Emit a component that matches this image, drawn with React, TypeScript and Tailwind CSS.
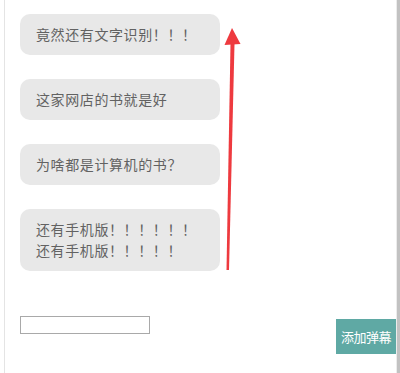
import React from "react"

const messages = [
  "竟然还有文字识别！！！",
  "这家网店的书就是好",
  "为啥都是计算机的书？",
  "还有手机版！！！！！！\n还有手机版！！！！！",
]

function Arrow() {
  return (
    <svg className="absolute left-[220px] top-[24px]" width="28" height="252" viewBox="0 0 28 252">
      <polygon points="6.5,246 9,246 14.5,20 10.5,20" fill="#ee3a3f" />
      <polygon points="12,4 4.5,21 20.5,20" fill="#ee3a3f" />
    </svg>
  )
}

export default function App() {
  return (
    <div
      className="relative w-[400px] h-[373px] bg-white overflow-hidden flex"
      style={{ fontFamily: '"Noto Sans CJK SC", "Liberation Sans", sans-serif' }}
    >
      <div className="w-[4px]" />
      <div className="w-px bg-[#e4e4e4]" />
      <div className="flex-1 flex flex-col">
        <div className="flex flex-col gap-[24px] pt-[14px] pl-[15px]">
          {messages.map((m, i) => (
            <div
              key={i}
              className="w-[200px] rounded-[10px] bg-[#e8e8e8] px-[16px] py-[10px] text-[14px] leading-[21px] tracking-[0.6px] text-[#626262] whitespace-pre-line"
            >
              {m}
            </div>
          ))}
        </div>
        <div className="flex items-start justify-between pl-[15px] mt-[45px]">
          <input type="text" className="w-[130px] h-[18px] border border-[#a9a9a9] outline-none" />
          <button className="mt-[3px] w-[60px] h-[35px] bg-[#5fa9a4] text-white text-[13px] tracking-[-0.5px]">
            添加弹幕
          </button>
        </div>
      </div>
      <div className="w-px bg-[#ececec]" />
      <div className="w-[3px] bg-[#c2c2c2]" />
      <Arrow />
    </div>
  )
}
